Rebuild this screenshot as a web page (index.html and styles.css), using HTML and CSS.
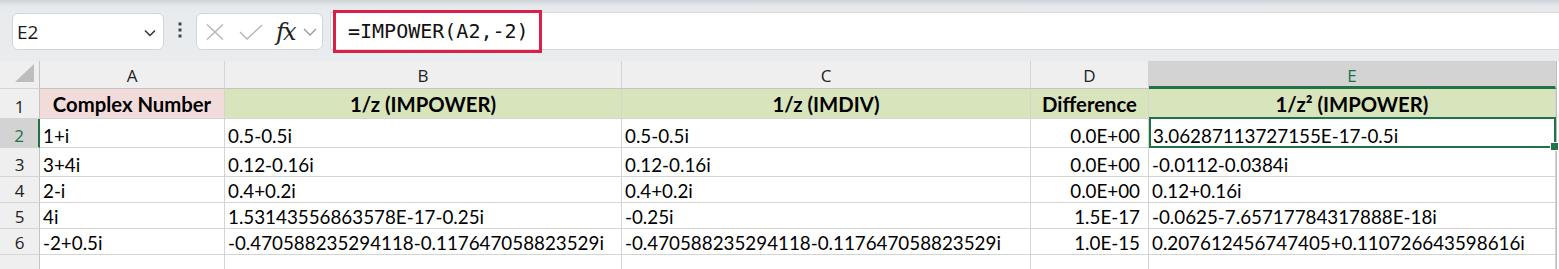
FILE: index.html
```html
<!DOCTYPE html>
<html lang="en">

<head>
  <meta charset="UTF-8">
  <title>IMPOWER</title>
  <link rel="stylesheet" href="styles.css">
</head>

<body>
  <!-- Barra de fórmulas -->
  <div class="formula-bar">
    <div class="name-box">
      <span>E2</span>
      <svg class="chev" width="12" height="8" viewBox="0 0 12 8"><path d="M1 1.5 L6 6.5 L11 1.5" fill="none" stroke="#333" stroke-width="1.5"/></svg>
    </div>
    <div class="dots">
      <svg width="4" height="16" viewBox="0 0 4 16"><rect x="0.5" y="0.5" width="3" height="3" fill="#444"/><rect x="0.5" y="6.5" width="3" height="3" fill="#444"/><rect x="0.5" y="12.5" width="3" height="3" fill="#444"/></svg>
    </div>
    <div class="fx-box">
      <svg width="18" height="16" viewBox="0 0 18 16"><path d="M1 0.5 L17 15.5 M17 0.5 L1 15.5" stroke="#b5b5b5" stroke-width="1.4" fill="none"/></svg>
      <svg width="24" height="16" viewBox="0 0 24 16"><path d="M1 8 L8 15 L23 1" stroke="#b5b5b5" stroke-width="1.4" fill="none"/></svg>
      <span class="fx">fx</span>
      <svg width="14" height="8" viewBox="0 0 14 8"><path d="M1 1 L7 7 L13 1" fill="none" stroke="#9a9a9a" stroke-width="1.3"/></svg>
    </div>
    <div class="formula-input">
      <div class="formula-text">=IMPOWER(A2,-2)</div>
      <div class="highlight"></div>
    </div>
  </div>

  <!-- Planilha -->
  <div class="sheet">
    <div class="corner"><svg width="20" height="19" viewBox="0 0 20 19"><path d="M19 0 L19 18 L0 18 Z" fill="#bdbdbd"/></svg></div>
    <div class="hdr">A</div>
    <div class="hdr">B</div>
    <div class="hdr">C</div>
    <div class="hdr">D</div>
    <div class="hdr active">E</div>
    <div class="edge"></div>

    <div class="rh">1</div>
    <div class="cell title pink">Complex Number</div>
    <div class="cell title green">1/z (IMPOWER)</div>
    <div class="cell title green">1/z (IMDIV)</div>
    <div class="cell title green">Difference</div>
    <div class="cell title green">1/z² (IMPOWER)</div>
    <div class="edge"></div>

    <div class="rh active">2</div>
    <div class="cell">1+i</div>
    <div class="cell">0.5-0.5i</div>
    <div class="cell">0.5-0.5i</div>
    <div class="cell num">0.0E+00</div>
    <div class="cell selected">3.06287113727155E-17-0.5i<span class="handle"></span></div>
    <div class="edge"></div>

    <div class="rh">3</div>
    <div class="cell">3+4i</div>
    <div class="cell">0.12-0.16i</div>
    <div class="cell">0.12-0.16i</div>
    <div class="cell num">0.0E+00</div>
    <div class="cell">-0.0112-0.0384i</div>
    <div class="edge"></div>

    <div class="rh">4</div>
    <div class="cell">2-i</div>
    <div class="cell">0.4+0.2i</div>
    <div class="cell">0.4+0.2i</div>
    <div class="cell num">0.0E+00</div>
    <div class="cell">0.12+0.16i</div>
    <div class="edge"></div>

    <div class="rh">5</div>
    <div class="cell">4i</div>
    <div class="cell">1.53143556863578E-17-0.25i</div>
    <div class="cell">-0.25i</div>
    <div class="cell num">1.5E-17</div>
    <div class="cell">-0.0625-7.65717784317888E-18i</div>
    <div class="edge"></div>

    <div class="rh">6</div>
    <div class="cell">-2+0.5i</div>
    <div class="cell">-0.470588235294118-0.117647058823529i</div>
    <div class="cell">-0.470588235294118-0.117647058823529i</div>
    <div class="cell num">1.0E-15</div>
    <div class="cell">0.207612456747405+0.110726643598616i</div>
    <div class="edge"></div>

    <div class="rh"></div>
    <div class="cell"></div>
    <div class="cell"></div>
    <div class="cell"></div>
    <div class="cell"></div>
    <div class="cell"></div>
    <div class="edge"></div>
  </div>
</body>

</html>
```

FILE: styles.css
```css
/* Estilos gerais */
body {
  margin: 0;
  padding: 0;
  overflow: hidden;
  background: #ffffff;
  font-family: "Lato", sans-serif;
  color: #000;
}

/* Barra de fórmulas */
.formula-bar {
  height: 61px;
  display: flex;
  align-items: flex-start;
  padding-left: 12px;
  background: linear-gradient(to bottom, #cfd3d7 0px, #e6e9ec 6px, #e9ecef 13px);
  box-sizing: border-box;
}

.name-box {
  margin-top: 13px;
  width: 152px;
  height: 37px;
  box-sizing: border-box;
  background: #fff;
  border: 1px solid #d3d6d9;
  border-radius: 6px;
  display: flex;
  align-items: center;
  justify-content: space-between;
  padding: 0 7px 0 4px;
  font-family: "Open Sans", sans-serif;
  font-size: 19px;
  color: #1a1a1a;
}

.name-box .chev {
  margin-top: 2px;
}

.dots {
  width: 32px;
  height: 61px;
  display: flex;
  align-items: center;
  justify-content: center;
  padding-bottom: 2px;
  box-sizing: border-box;
}

.fx-box {
  margin-top: 13px;
  width: 127px;
  height: 37px;
  box-sizing: border-box;
  background: #fff;
  border: 1px solid #d3d6d9;
  border-radius: 6px;
  display: flex;
  align-items: center;
  padding-left: 9px;
}

.fx-box svg:nth-child(2) {
  margin-left: 15px;
}

.fx {
  margin-left: 13px;
  font-family: "DejaVu Serif", "Liberation Serif", serif;
  font-style: italic;
  font-size: 24px;
  line-height: 30px;
  color: #222;
  letter-spacing: -2px;
}

.fx-box svg:last-child {
  margin-left: 9px;
}

.formula-input {
  position: relative;
  flex: 1;
  margin-left: 7px;
  margin-top: 12px;
  height: 38px;
  box-sizing: border-box;
  background: #fff;
  border-top: 1px solid #d6d8da;
  border-bottom: 1px solid #d6d8da;
  border-left: 1px solid #d6d8da;
}

.formula-text {
  padding-left: 17px;
  font-family: "DejaVu Sans Mono", monospace;
  font-size: 20px;
  line-height: 36px;
  color: #111;
}

/* Caixa vermelha de destaque */
.highlight {
  position: absolute;
  left: 2px;
  top: -3px;
  width: 209px;
  height: 43px;
  box-sizing: border-box;
  border: 3px solid #dc1f4a;
}

/* Grade da planilha */
.sheet {
  display: grid;
  grid-template-columns: 40px 185px 397px 409px 118px 407px 3px;
  grid-template-rows: 28px 30px 29px 29px 26px 26px 26px 26px;
}

.corner,
.hdr,
.rh,
.cell {
  box-sizing: border-box;
  border-right: 1px solid #d4d4d4;
  border-bottom: 1px solid #d4d4d4;
}

.corner {
  background: #efefef;
  display: flex;
  align-items: flex-end;
  justify-content: flex-end;
  padding: 0 4px 5px 0;
  border-right-color: #c4c4c4;
}

.hdr {
  background: #efefef;
  display: flex;
  align-items: center;
  justify-content: center;
  font-family: "Open Sans", sans-serif;
  font-size: 17px;
  color: #222;
  border-bottom-color: #c4c4c4;
  padding-top: 1px;
}

.hdr.active {
  background: #d3d3d3;
  color: #1e7145;
  border-bottom: 3px solid #217346;
  padding-top: 3px;
}

.rh {
  background: #efefef;
  display: flex;
  align-items: flex-end;
  justify-content: center;
  padding-bottom: 2px;
  line-height: 18px;
  font-family: "Open Sans", sans-serif;
  font-size: 17px;
  color: #222;
  border-right-color: #c4c4c4;
}

.rh.active {
  background: #d3d3d3;
  color: #1e7145;
  border-right: 2px solid #217346;
}

.edge {
  background: #fff;
  border-left: 1px solid #bdbdbd;
}

.cell {
  display: flex;
  align-items: flex-end;
  padding: 0 3px 4px 3px;
  font-size: 18.8px;
  line-height: 14px;
  white-space: nowrap;
  overflow: hidden;
  border-color: #d4d4d4;
}

.cell.num {
  justify-content: flex-end;
  padding-right: 8px;
}

.cell.title {
  align-items: center;
  justify-content: center;
  font-weight: bold;
  font-size: 20.3px;
  line-height: 22px;
  padding-bottom: 0;
}

.pink {
  background: #f2dcdb;
}

.green {
  background: #d8e4bc;
}

/* Célula selecionada */
.selected {
  position: relative;
  overflow: visible;
  border: 2px solid #217346;
  margin-top: -2px;
  padding-left: 2px;
  padding-bottom: 3px;
}

.handle {
  position: absolute;
  right: -5px;
  bottom: -5px;
  width: 7px;
  height: 7px;
  background: #217346;
  border: 1px solid #fff;
}
```
